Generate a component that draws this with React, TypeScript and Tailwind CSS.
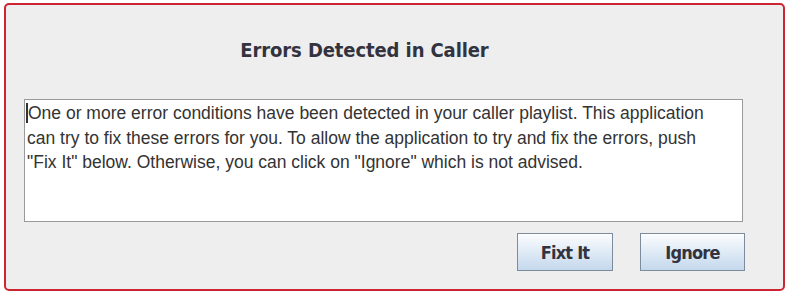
export default function App() {
  return (
    <div className="w-[787px] h-[294px] bg-white pt-[3px] pl-[4px]">
      <div className="w-[781px] h-[288px] border-2 border-[#cc2430] rounded-[5px] bg-[#eeeeee] flex flex-col pl-[18px]">
        <div className="h-[94px] w-[719px] flex items-center justify-center pr-[38px] pb-[4px]">
          <span className="font-['DejaVu_Sans_Condensed','DejaVu_Sans',sans-serif] font-bold text-[20px] text-[#333340] tracking-[-0.1px]">
            Errors Detected in Caller
          </span>
        </div>
        <div className="w-[719px] h-[123px] bg-white border border-[#9a9a9a] pl-[2px] pt-[1px] font-['Liberation_Sans',sans-serif] text-[17.5px] leading-[24.5px] text-[#333333] whitespace-nowrap">
          <span className="border-l-2 border-[#333] -ml-[1px]"></span>
          One or more error conditions have been detected in your caller playlist. This application
          <br />
          can try to fix these errors for you. To allow the application to try and fix the errors, push
          <br />
          "Fix It" below. Otherwise, you can click on "Ignore" which is not advised.
        </div>
        <div className="flex mt-[11px] pl-[493px] gap-[27px]">
          <button className="w-[96px] h-[38px] border border-[#7d8c9c] bg-gradient-to-b from-[#fbfdff] to-[#c4d8ec] font-['DejaVu_Sans_Condensed','DejaVu_Sans',sans-serif] font-bold text-[18px] tracking-[-0.8px] text-[#333340]">
            Fixt It
          </button>
          <button className="w-[105px] h-[38px] border border-[#7d8c9c] bg-gradient-to-b from-[#fbfdff] to-[#c4d8ec] font-['DejaVu_Sans_Condensed','DejaVu_Sans',sans-serif] font-bold text-[18px] tracking-[-0.8px] text-[#333340]">
            Ignore
          </button>
        </div>
      </div>
    </div>
  );
}
